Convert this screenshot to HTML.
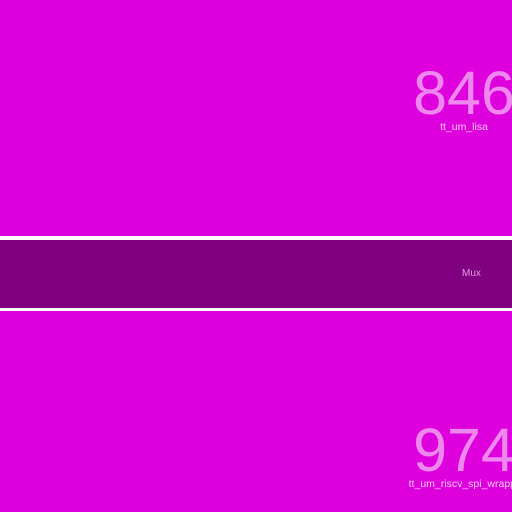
<!DOCTYPE html>
<html><head><style>
html,body{margin:0;padding:0;width:512px;height:512px;overflow:hidden;background:#dd00dd;font-family:"Liberation Sans",sans-serif;}
.abs{position:absolute;white-space:nowrap;}
.num{font-size:61px;color:#ee88ee;line-height:1;width:300px;text-align:center;}
.lbl{font-size:10.5px;color:#f7c8f7;line-height:1;width:300px;text-align:center;}
</style></head><body>
<div class="abs" style="left:0;top:236px;width:512px;height:4px;background:#fff"></div>
<div class="abs" style="left:0;top:240px;width:512px;height:68px;background:#800080"></div>
<div class="abs" style="left:0;top:308px;width:512px;height:3px;background:#fff"></div>
<div class="abs num" style="left:314px;top:63px">846</div>
<div class="abs lbl" style="left:314px;top:122px">tt_um_lisa</div>
<div class="abs" style="left:462px;top:268px;font-size:10px;color:#e0a0e0">Mux</div>
<div class="abs num" style="left:314px;top:420px">974</div>
<div class="abs lbl" style="left:317px;top:479px">tt_um_riscv_spi_wrapper</div>
</body></html>
